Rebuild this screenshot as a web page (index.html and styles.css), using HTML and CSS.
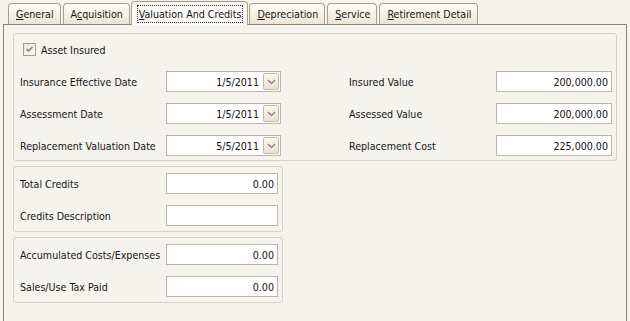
FILE: index.html
```html
<!DOCTYPE html>
<html lang="en">
<head>
    <meta charset="UTF-8">
    <title>Valuation And Credits</title>
    <link rel="stylesheet" href="styles.css">
</head>
<body>
    <div class="window">
        <div class="tabs">
            <div class="tab"><u>G</u>eneral</div>
            <div class="tab">A<u>c</u>quisition</div>
            <div class="tab active"><span class="focus"><u>V</u>aluation And Credits</span></div>
            <div class="tab"><u>D</u>epreciation</div>
            <div class="tab"><u>S</u>ervice</div>
            <div class="tab"><u>R</u>etirement Detail</div>
        </div>

        <div class="panel">
            <div class="group group-insurance">
                <div class="check-row">
                    <span class="checkbox">
                        <svg width="11" height="11" viewBox="0 0 11 11"><path d="M2.5 5 L4.5 7 L8.5 3" fill="none" stroke="#8c8c8c" stroke-width="1.6"/></svg>
                    </span>
                    Asset Insured
                </div>
                <div class="grid grid-wide">
                    <span class="label">Insurance Effective Date</span>
                    <div class="field date">
                        <span>1/5/2011</span>
                        <span class="drop"><svg width="9" height="6" viewBox="0 0 9 6"><path d="M1 1 L4.5 4.5 L8 1" fill="none" stroke="#8a7c6c" stroke-width="1.3"/></svg></span>
                    </div>
                    <span class="label">Insured Value</span>
                    <div class="field">200,000.00</div>

                    <span class="label">Assessment Date</span>
                    <div class="field date">
                        <span>1/5/2011</span>
                        <span class="drop"><svg width="9" height="6" viewBox="0 0 9 6"><path d="M1 1 L4.5 4.5 L8 1" fill="none" stroke="#8a7c6c" stroke-width="1.3"/></svg></span>
                    </div>
                    <span class="label">Assessed Value</span>
                    <div class="field">200,000.00</div>

                    <span class="label">Replacement Valuation Date</span>
                    <div class="field date">
                        <span>5/5/2011</span>
                        <span class="drop"><svg width="9" height="6" viewBox="0 0 9 6"><path d="M1 1 L4.5 4.5 L8 1" fill="none" stroke="#8a7c6c" stroke-width="1.3"/></svg></span>
                    </div>
                    <span class="label">Replacement Cost</span>
                    <div class="field">225,000.00</div>
                </div>
            </div>

            <div class="group group-small">
                <div class="grid grid-narrow">
                    <span class="label">Total Credits</span>
                    <div class="field">0.00</div>
                    <span class="label">Credits Description</span>
                    <div class="field"></div>
                </div>
            </div>

            <div class="group group-small">
                <div class="grid grid-narrow">
                    <span class="label">Accumulated Costs/Expenses</span>
                    <div class="field">0.00</div>
                    <span class="label">Sales/Use Tax Paid</span>
                    <div class="field">0.00</div>
                </div>
            </div>
        </div>
    </div>
</body>
</html>
```

FILE: styles.css
```css
* {
    margin: 0;
    padding: 0;
    box-sizing: border-box;
}

body {
    background: #f5f3ee;
    font-family: "DejaVu Sans Condensed", "DejaVu Sans", sans-serif;
    font-size: 10.6px;
    color: #161616;
    overflow: hidden;
}

.window {
    width: 630px;
    height: 321px;
}

/* tab strip */
.tabs {
    display: flex;
    align-items: flex-end;
    gap: 2px;
    height: 24px;
    padding-left: 8px;
}

.tab {
    height: 21px;
    line-height: 21px;
    padding: 0 6px 0 7px;
    border: 1px solid #a99d8c;
    border-bottom: none;
    border-radius: 4px 4px 0 0;
    background: linear-gradient(#fdfdfb, #f3efe4 60%, #ebe5d6);
    white-space: nowrap;
}

.tab.active {
    position: relative;
    z-index: 1;
    height: 24px;
    margin: 0 -1px -1px;
    padding: 3px 4px 0 5px;
    line-height: 16px;
    background: #fbfaf7;
}

.focus {
    display: inline-block;
    padding: 0 1px;
    border: 1px dotted #333;
}

/* page */
.panel {
    width: 624px;
    height: 297px;
    margin-left: 3px;
    padding: 8px 0 0 9px;
    border: 1px solid #8f8174;
    border-bottom: none;
    background: #f5f3ee;
}

.group {
    border: 1px solid #d6d0c5;
    border-radius: 3px;
    margin-bottom: 5px;
}

.group-insurance {
    width: 604px;
    padding: 9px 3px 4px 6px;
}

.group-small {
    width: 270px;
    padding: 6px 3px 5px 6px;
}

.check-row {
    display: flex;
    align-items: center;
    gap: 5px;
    height: 13px;
    padding-top: 1px;
    margin: 0 0 15px 3px;
}

.checkbox {
    display: flex;
    align-items: center;
    justify-content: center;
    width: 13px;
    height: 13px;
    margin-top: -1px;
    border: 1px solid #a69c8e;
    background: linear-gradient(135deg, #e9e6de, #fbfaf7);
}

.grid {
    display: grid;
    grid-auto-rows: 21px;
    row-gap: 11px;
    align-items: center;
}

.label {
    padding-top: 1px;
    white-space: nowrap;
}

.grid-wide {
    grid-template-columns: 146px 115px 68px 147px 116px;
}

.grid-wide .label:nth-child(4n+3) {
    grid-column: 4;
}

.grid-narrow {
    grid-template-columns: 146px 112px;
}

.field {
    height: 21px;
    line-height: 20px;
    padding-right: 3px;
    border: 1px solid #bfb4a5;
    background: #fff;
    text-align: right;
    color: #111;
}

.field.date {
    display: flex;
    align-items: center;
    justify-content: flex-end;
    gap: 4px;
    padding-right: 1px;
}

.field.date span:first-child {
    padding-top: 1px;
}

.drop {
    display: flex;
    align-items: center;
    justify-content: center;
    width: 16px;
    height: 17px;
    border: 1px solid #c6baa8;
    border-radius: 2px;
    background: linear-gradient(#faf8f3, #e7e0d1);
}
```
